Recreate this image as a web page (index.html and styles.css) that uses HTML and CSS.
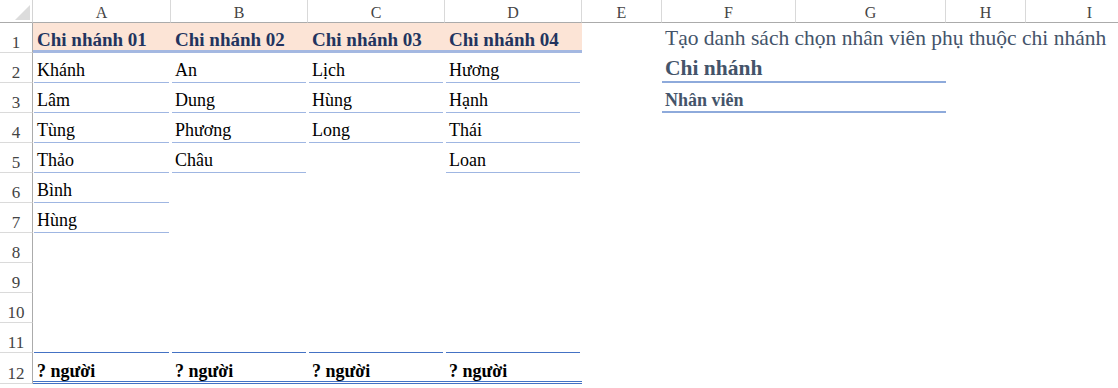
FILE: index.html
```html
<!DOCTYPE html>
<html lang="vi">
<head>
<meta charset="utf-8">
<title>Chi nhánh</title>
<link rel="stylesheet" href="styles.css">
</head>
<body>
<div class="sheet">
  <div class="corner"><svg width="32" height="22" viewBox="0 0 32 22"><polygon points="15,20 30,5 30,20" fill="#dcdcdc"/></svg></div>
  <div class="ch">A</div><div class="ch">B</div><div class="ch">C</div><div class="ch">D</div><div class="ch">E</div><div class="ch">F</div><div class="ch">G</div><div class="ch">H</div><div class="ch">I</div>

  <div class="rh">1</div>
  <div class="hd">Chi nhánh 01</div><div class="hd">Chi nhánh 02</div><div class="hd">Chi nhánh 03</div><div class="hd">Chi nhánh 04</div>
  <div class="x"></div>
  <div class="title">Tạo danh sách chọn nhân viên phụ thuộc chi nhánh</div>

  <div class="rh">2</div>
  <div class="d">Khánh</div><div class="d">An</div><div class="d">Lịch</div><div class="d">Hương</div>
  <div class="x"></div>
  <div class="f2">Chi nhánh</div>
  <div class="x sp2"></div>

  <div class="rh">3</div>
  <div class="d">Lâm</div><div class="d">Dung</div><div class="d">Hùng</div><div class="d">Hạnh</div>
  <div class="x"></div>
  <div class="f3">Nhân viên</div>
  <div class="x sp2"></div>

  <div class="rh">4</div>
  <div class="d">Tùng</div><div class="d">Phương</div><div class="d">Long</div><div class="d">Thái</div>
  <div class="x sp5"></div>

  <div class="rh">5</div>
  <div class="d">Thảo</div><div class="d">Châu</div><div class="x"></div><div class="d">Loan</div>
  <div class="x sp5"></div>

  <div class="rh">6</div>
  <div class="d">Bình</div>
  <div class="x sp8"></div>

  <div class="rh">7</div>
  <div class="d">Hùng</div>
  <div class="x sp8"></div>

  <div class="rh">8</div><div class="x sp9"></div>
  <div class="rh">9</div><div class="x sp9"></div>
  <div class="rh">10</div><div class="x sp9"></div>

  <div class="rh">11</div>
  <div class="ln"></div><div class="ln"></div><div class="ln"></div><div class="ln"></div>
  <div class="x sp5"></div>

  <div class="rh">12</div>
  <div class="tot">? người</div><div class="tot">? người</div><div class="tot">? người</div><div class="tot">? người</div>
  <div class="x sp5"></div>
</div>
</body>
</html>
```

FILE: styles.css
```css
* {
  box-sizing: border-box;
  margin: 0;
  padding: 0;
}

html, body {
  width: 1118px;
  height: 388px;
  overflow: hidden;
  background: #ffffff;
}

body {
  margin: 0;
  font-family: "Liberation Serif", "Times New Roman", serif;
  color: #000;
}

.sheet {
  display: grid;
  grid-template-columns: 33px 138px 137px 137px 137px 80px 134px 150px 80px 128px;
  grid-template-rows: 23px repeat(11, 30px) 31px;
  width: 1154px;
}

.sheet > div {
  display: flex;
  align-items: flex-end;
  min-width: 0;
}

.corner {
  border-right: 1px solid #d4d4d4;
  border-bottom: 1px solid #ababab;
}

.corner svg {
  display: block;
}

.ch {
  justify-content: center;
  border-right: 1px solid #d9d9d9;
  border-bottom: 1px solid #ababab;
  font-size: 16px;
  line-height: 18px;
  color: #444444;
}

.rh {
  justify-content: center;
  border-right: 1px solid #ababab;
  border-bottom: 1px solid #dadada;
  font-size: 17px;
  line-height: 18px;
  color: #444444;
}

.hd {
  background: #fce4d6;
  border-bottom: 3px solid #a4b8e1;
  font-weight: bold;
  font-size: 19px;
  line-height: 20px;
  color: #22345f;
  padding-left: 4px;
  white-space: nowrap;
}

.d {
  margin: 0 2px 0 1px;
  border-bottom: 1px solid #9fb6e2;
  font-size: 18px;
  line-height: 20px;
  padding: 0 0 2px 3px;
  white-space: nowrap;
}

.ln {
  margin: 0 2px 0 1px;
  border-bottom: 1px solid #4472c4;
}

.tot {
  border-bottom: 3px double #4472c4;
  font-weight: bold;
  font-size: 18px;
  line-height: 20px;
  padding-left: 4px;
  white-space: nowrap;
}

.title {
  grid-column: span 4;
  font-size: 21.5px;
  line-height: 24px;
  color: #44546a;
  padding: 0 0 3px 3px;
  white-space: nowrap;
}

.f2 {
  grid-column: span 2;
  font-weight: bold;
  font-size: 21.5px;
  line-height: 24px;
  color: #44546a;
  border-bottom: 2px solid #8eaadb;
  padding: 0 0 1px 3px;
  white-space: nowrap;
}

.f3 {
  grid-column: span 2;
  font-weight: bold;
  font-size: 18px;
  line-height: 20px;
  color: #44546a;
  border-bottom: 2px solid #8eaadb;
  padding: 0 0 1px 3px;
  white-space: nowrap;
}

.sp2 { grid-column: span 2; }
.sp5 { grid-column: span 5; }
.sp8 { grid-column: span 8; }
.sp9 { grid-column: span 9; }
```
